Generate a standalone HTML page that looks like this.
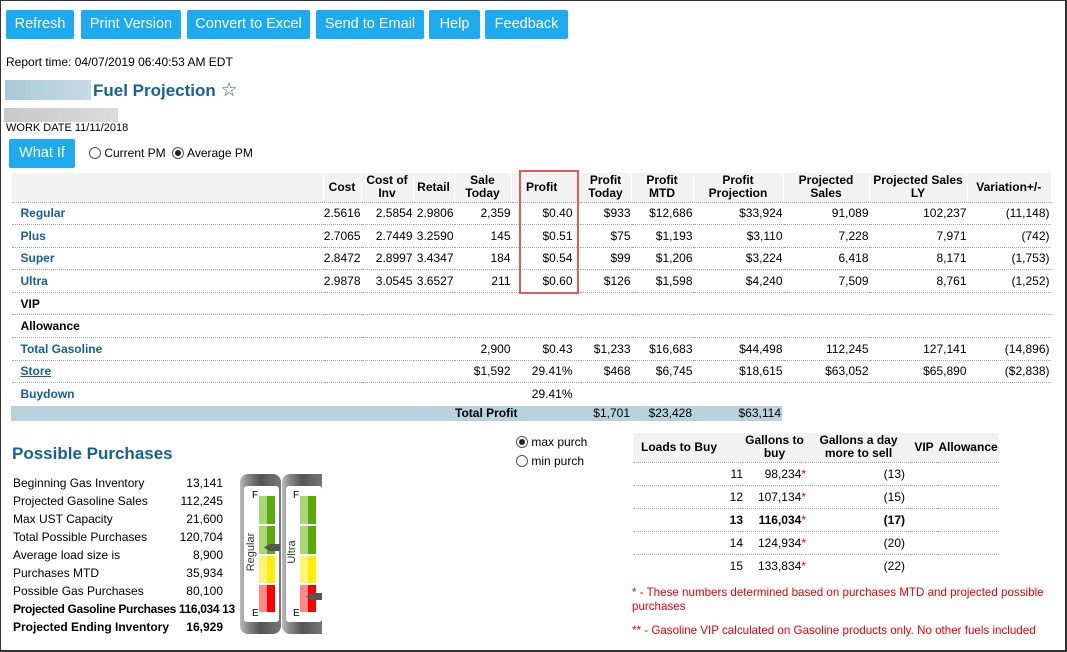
<!DOCTYPE html>
<html><head><meta charset="utf-8"><style>
*{box-sizing:border-box;margin:0;padding:0}
body{width:1067px;height:652px;overflow:hidden;background:#fff;font-family:"Liberation Sans",Arial,sans-serif;font-size:12px;color:#000;position:relative}
.frame{position:absolute;left:0;top:0;width:1067px;height:652px;border:1px solid #333;border-right-width:2px;border-bottom-width:2px}
.a{position:absolute;white-space:nowrap}
.btn{position:absolute;top:10px;height:29px;background:#1eaaf1;color:#fff;font-size:14.5px;line-height:29px;text-align:center;border-radius:2px}
.blue{color:#17609a}
table.m{position:absolute;left:11px;top:173px;border-collapse:collapse;table-layout:fixed;width:1039px}
table.m td,table.m th{padding:0 1px 0 0;text-align:right;white-space:nowrap;overflow:visible}
table.m th{background:#f2f2f2;font-weight:bold;height:29px;line-height:13px;border-left:1px solid #fff;text-align:center}
table.m td{height:22.6px;border-top:1px dotted #aaa}
table.m tr.h th{border-bottom:1px dotted #aaa}
table.m td:nth-child(6){padding-right:8px}
table.m td.n{text-align:left;padding-left:9px;font-weight:bold;color:#17609a}
table.m td.k{color:#000}
.radio{display:inline-block;width:12px;height:12px;border:1px solid #555;border-radius:50%;vertical-align:-2px;position:relative;background:#fff}
.radio.on:after{content:"";position:absolute;left:2px;top:2px;width:6px;height:6px;border-radius:50%;background:#222}
.pp div{position:absolute;left:13px;height:18px;line-height:18px;white-space:nowrap}
.pp span{position:absolute;right:0}
table.r{position:absolute;left:633px;top:433px;border-collapse:collapse;table-layout:fixed;width:366px}
table.r th{background:#f2f2f2;font-weight:bold;line-height:13px;height:29px;border-bottom:1px dotted #aaa;white-space:nowrap}
table.r td{height:23px;border-top:1px dotted #aaa;text-align:right}
table.r tr:nth-child(2) td{border-top:none}
.st{color:#e00}
.g{position:absolute;top:474px;height:160px;border-radius:8px;background:linear-gradient(90deg,#bbb,#888 20%,#555 50%,#777);}
.gi{position:absolute;background:#fff;border-radius:3px;top:12px;bottom:12px}
.seg{position:absolute;width:16px}
.fn{font-size:11.6px}
</style></head><body>
<div class="frame"></div>
<div class="btn" style="left:6px;width:68px">Refresh</div>
<div class="btn" style="left:81px;width:100px">Print Version</div>
<div class="btn" style="left:187px;width:123px">Convert to Excel</div>
<div class="btn" style="left:316px;width:108px">Send to Email</div>
<div class="btn" style="left:429px;width:51px">Help</div>
<div class="btn" style="left:485px;width:83px">Feedback</div>
<div class="a" style="left:6px;top:55px">Report time: 04/07/2019 06:40:53 AM EDT</div>
<div class="a" style="left:5px;top:80px;width:86px;height:20px;background:linear-gradient(90deg,#a9c8d8,#c8dbe6)"></div>
<div class="a blue" style="left:93px;top:79px;font-size:17px;font-weight:bold">Fuel Projection <span style="font-weight:normal;font-size:19px;color:#17609a">☆</span></div>
<div class="a" style="left:4px;top:108px;width:114px;height:14px;background:linear-gradient(90deg,#c8c8c8,#dcdcdc)"></div>
<div class="a" style="left:6px;top:122px;font-size:11px">WORK DATE 11/11/2018</div>
<div class="btn" style="left:9px;top:139px;width:66px">What If</div>
<div class="a" style="left:89px;top:146px"><span class="radio"></span> Current PM &nbsp;<span class="radio on"></span> Average PM</div>

<table class="m">
<colgroup><col style="width:312px"><col style="width:38px"><col style="width:52px"><col style="width:41px"><col style="width:57px"><col style="width:69px"><col style="width:51px"><col style="width:62px"><col style="width:90px"><col style="width:86px"><col style="width:98px"><col style="width:83px"></colgroup>
<tr class="h"><th></th><th>Cost</th><th>Cost of<br>Inv</th><th>Retail</th><th>Sale<br>Today</th><th style="text-align:left;padding-left:14px">Profit</th><th>Profit<br>Today</th><th>Profit<br>MTD</th><th>Profit<br>Projection</th><th>Projected<br>Sales</th><th>Projected Sales<br>LY</th><th>Variation+/-</th></tr>
<tr><td class="n">Regular</td><td>2.5616</td><td>2.5854</td><td>2.9806</td><td>2,359</td><td>$0.40</td><td>$933</td><td>$12,686</td><td>$33,924</td><td>91,089</td><td>102,237</td><td>(11,148)</td></tr>
<tr><td class="n">Plus</td><td>2.7065</td><td>2.7449</td><td>3.2590</td><td>145</td><td>$0.51</td><td>$75</td><td>$1,193</td><td>$3,110</td><td>7,228</td><td>7,971</td><td>(742)</td></tr>
<tr><td class="n">Super</td><td>2.8472</td><td>2.8997</td><td>3.4347</td><td>184</td><td>$0.54</td><td>$99</td><td>$1,206</td><td>$3,224</td><td>6,418</td><td>8,171</td><td>(1,753)</td></tr>
<tr><td class="n">Ultra</td><td>2.9878</td><td>3.0545</td><td>3.6527</td><td>211</td><td>$0.60</td><td>$126</td><td>$1,598</td><td>$4,240</td><td>7,509</td><td>8,761</td><td>(1,252)</td></tr>
<tr><td class="n k">VIP</td><td></td><td></td><td></td><td></td><td></td><td></td><td></td><td></td><td></td><td></td><td></td></tr>
<tr><td class="n k">Allowance</td><td></td><td></td><td></td><td></td><td></td><td></td><td></td><td></td><td></td><td></td><td></td></tr>
<tr><td class="n">Total Gasoline</td><td></td><td></td><td></td><td>2,900</td><td>$0.43</td><td>$1,233</td><td>$16,683</td><td>$44,498</td><td>112,245</td><td>127,141</td><td>(14,896)</td></tr>
<tr><td class="n"><u>Store</u></td><td></td><td></td><td></td><td>$1,592</td><td>29.41%</td><td>$468</td><td>$6,745</td><td>$18,615</td><td>$63,052</td><td>$65,890</td><td>($2,838)</td></tr>
<tr><td class="n">Buydown</td><td></td><td></td><td></td><td></td><td>29.41%</td><td></td><td></td><td></td><td></td><td></td><td></td></tr>
</table>
<div class="a" style="left:11px;top:406px;width:771px;height:15px;background:#b8d3de"></div>
<div class="a" style="left:455px;top:406px;font-weight:bold;line-height:15px">Total Profit</div>
<div class="a" style="left:580px;top:406px;width:50px;text-align:right;line-height:15px">$1,701</div>
<div class="a" style="left:631px;top:406px;width:61px;text-align:right;line-height:15px">$23,428</div>
<div class="a" style="left:693px;top:406px;width:88px;text-align:right;line-height:15px">$63,114</div>
<div class="a" style="left:519px;top:170px;width:60px;height:124px;border:2px solid #e85a5a"></div>

<div class="a blue" style="left:12px;top:444px;font-size:17px;font-weight:bold">Possible Purchases</div>
<div class="pp">
<div style="top:474px;width:210px">Beginning Gas Inventory<span>13,141</span></div>
<div style="top:492px;width:210px">Projected Gasoline Sales<span>112,245</span></div>
<div style="top:510px;width:210px">Max UST Capacity<span>21,600</span></div>
<div style="top:528px;width:210px">Total Possible Purchases<span>120,704</span></div>
<div style="top:546px;width:210px">Average load size is<span>8,900</span></div>
<div style="top:564px;width:210px">Purchases MTD<span>35,934</span></div>
<div style="top:582px;width:210px">Possible Gas Purchases<span>80,100</span></div>
<div style="top:600px;font-weight:bold;letter-spacing:-0.35px">Projected Gasoline Purchases 116,034 13</div>
<div style="top:618px;width:210px;font-weight:bold">Projected Ending Inventory<span>16,929</span></div>
</div>

<div class="g" style="left:240px;width:41px"><div class="gi" style="left:4px;right:2px">
<div class="a" style="left:8px;top:4px;font-size:10px">F</div><div class="a" style="left:8px;top:122px;font-size:10px">E</div>
<div class="a" style="left:-13px;top:60px;width:40px;text-align:center;font-size:11px;transform:rotate(-90deg);color:#333">Regular</div>
<div class="seg" style="left:15px;top:10px;height:28px;background:linear-gradient(90deg,#a8d77a 50%,#5aab0a 50%)"></div>
<div class="seg" style="left:15px;top:40px;height:28px;background:linear-gradient(90deg,#a8d77a 50%,#5aab0a 50%)"></div>
<div class="seg" style="left:15px;top:70px;height:27px;background:linear-gradient(90deg,#fff37a 50%,#ffee00 50%)"></div>
<div class="seg" style="left:15px;top:99px;height:27px;background:linear-gradient(90deg,#f88 50%,#f00 50%)"></div>
<div class="a" style="left:20px;top:58px;width:16px;height:7px;background:#555;clip-path:polygon(0 50%,35% 0,100% 0,100% 100%,35% 100%)"></div>
</div></div>
<div class="g" style="left:282px;width:40px;border-radius:8px 0 0 8px"><div class="gi" style="left:4px;right:0">
<div class="a" style="left:7px;top:4px;font-size:10px">F</div><div class="a" style="left:7px;top:122px;font-size:10px">E</div>
<div class="a" style="left:-14px;top:60px;width:40px;text-align:center;font-size:11px;transform:rotate(-90deg);color:#333">Ultra</div>
<div class="seg" style="left:14px;top:10px;height:28px;background:linear-gradient(90deg,#a8d77a 50%,#5aab0a 50%)"></div>
<div class="seg" style="left:14px;top:40px;height:28px;background:linear-gradient(90deg,#a8d77a 50%,#5aab0a 50%)"></div>
<div class="seg" style="left:14px;top:70px;height:27px;background:linear-gradient(90deg,#fff37a 50%,#ffee00 50%)"></div>
<div class="seg" style="left:14px;top:99px;height:27px;background:linear-gradient(90deg,#f88 50%,#f00 50%)"></div>
<div class="a" style="left:20px;top:107px;width:16px;height:7px;background:#555;clip-path:polygon(0 50%,35% 0,100% 0,100% 100%,35% 100%)"></div>
</div></div>

<div class="a" style="left:516px;top:435px;line-height:14px"><span class="radio on"></span> max purch</div>
<div class="a" style="left:516px;top:454px;line-height:14px"><span class="radio"></span> min purch</div>

<table class="r">
<colgroup><col style="width:110px"><col style="width:63px"><col style="width:105px"><col style="width:26px"><col style="width:62px"></colgroup>
<tr><th style="text-align:left;padding-left:8px">Loads to Buy</th><th>Gallons to<br>buy</th><th>Gallons a day<br>more to sell</th><th>VIP</th><th>Allowance</th></tr>
<tr><td>11</td><td>98,234<span class="st">*</span></td><td style="padding-right:6px">(13)</td><td></td><td></td></tr>
<tr><td>12</td><td>107,134<span class="st">*</span></td><td style="padding-right:6px">(15)</td><td></td><td></td></tr>
<tr style="font-weight:bold"><td>13</td><td>116,034<span class="st" style="font-weight:normal">*</span></td><td style="padding-right:6px">(17)</td><td></td><td></td></tr>
<tr><td>14</td><td>124,934<span class="st">*</span></td><td style="padding-right:6px">(20)</td><td></td><td></td></tr>
<tr><td>15</td><td>133,834<span class="st">*</span></td><td style="padding-right:6px">(22)</td><td></td><td></td></tr>
</table>
<div class="a st fn" style="left:632px;top:586px;width:425px;white-space:normal;line-height:14px">* - These numbers determined based on purchases MTD and projected possible purchases</div>
<div class="a st fn" style="left:632px;top:624px">** - Gasoline VIP calculated on Gasoline products only. No other fuels included</div>
</body></html>
